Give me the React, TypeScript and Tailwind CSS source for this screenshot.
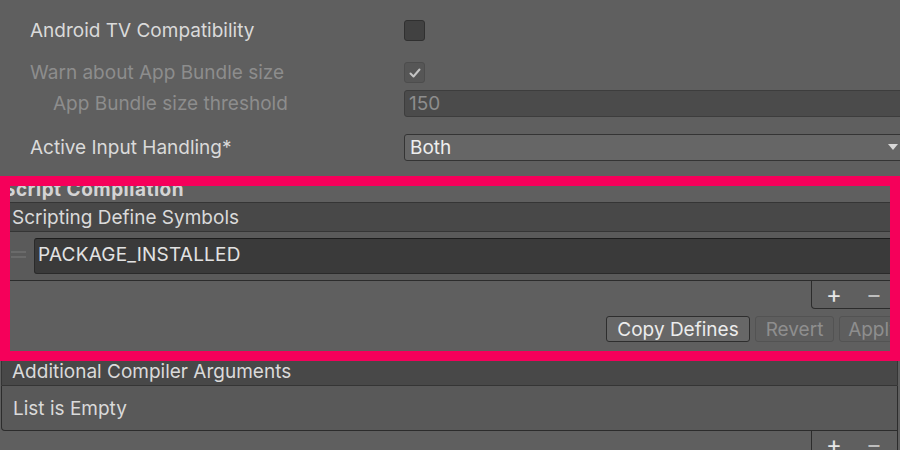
const labelCls = "pl-[30px] text-[#dadada]";

function Check() {
  return (
    <svg width="14" height="14" viewBox="0 0 14 14" fill="none">
      <path d="M2.5 7.5 L5.5 10.5 L11.5 3.5" stroke="#c4c4c4" strokeWidth="2" strokeLinecap="round" strokeLinejoin="round" />
    </svg>
  );
}

function ListFooter() {
  return (
    <div className="flex justify-end">
      <div className="flex h-[28px] w-[87px] items-center rounded-b-[4px] border-x border-b border-[#2c2c2c] bg-[#5f5f5f]">
        <span className="ml-[12px] w-[20px] text-center text-[24px] leading-none font-normal text-[#e6e6e6]">+</span>
        <span className="ml-[20px] w-[20px] text-center text-[24px] leading-none text-[#bdbdbd]">−</span>
      </div>
    </div>
  );
}

export default function App() {
  return (
    <div className="relative h-[450px] w-[900px] overflow-hidden bg-[#5f5f5f] font-['Inter','Noto_Sans',sans-serif] text-[19px] leading-none text-[#dadada]">
      <div className="flex flex-col pt-[20px]">
        {/* Android TV */}
        <div className="grid h-[21px] grid-cols-[404px_1fr] items-center">
          <span className={labelCls}>Android TV Compatibility</span>
          <div className="-mt-[1px] h-[21px] w-[21px] rounded-[3px] border border-[#303030] bg-[#414141]" />
        </div>

        {/* Warn */}
        <div className="mt-[21px] grid h-[21px] grid-cols-[404px_1fr] items-center">
          <span className="pl-[30px] text-[#8d8d8d]">Warn about App Bundle size</span>
          <div className="flex h-[21px] w-[21px] items-center justify-center rounded-[3px] border border-[#4d4d4d] bg-[#565656]">
            <Check />
          </div>
        </div>

        {/* Threshold */}
        <div className="mt-[7px] grid h-[27px] grid-cols-[404px_1fr] items-center">
          <span className="pl-[53px] text-[#8d8d8d]">App Bundle size threshold</span>
          <div className="flex h-[27px] w-[499px] items-center rounded-[3px] border border-[#3d3d3d] bg-[#4b4b4b] pl-[4px] text-[#8d8d8d]">
            150
          </div>
        </div>

        {/* Input handling */}
        <div className="mt-[17px] grid h-[27px] grid-cols-[404px_1fr] items-center">
          <span className={labelCls}>Active Input Handling*</span>
          <div className="flex h-[27px] w-[499px] items-center justify-between rounded-[3px] border border-[#343434] bg-[#666666] pl-[5px] pr-[4px] text-[#eeeeee]">
            <span>Both</span>
            <svg width="10" height="7" viewBox="0 0 10 7">
              <path d="M0 0 H10 L5 6 Z" fill="#d8d8d8" />
            </svg>
          </div>
        </div>

        {/* Script Compilation header */}
        <div className="mt-[15px] flex h-[26px] items-center pl-[3px] font-bold tracking-[0.5px] text-[#d4d4d4]">
          Script Compilation
        </div>

        {/* Scripting Define Symbols */}
        <div className="ml-[1px] w-[897px]">
          <div className="flex h-[30px] items-center rounded-t-[3px] border border-[#353535] bg-[#484848] pl-[10px]">
            Scripting Define Symbols
          </div>
          <div className="flex h-[49px] items-start border-x border-b border-[#2c2c2c] bg-[#5a5a5a] pt-[6px]">
            <div className="mt-[13px] ml-[9px] flex w-[15px] flex-col gap-[3px]">
              <div className="h-[2px] bg-[#6a6a6a]" />
              <div className="h-[2px] bg-[#6a6a6a]" />
            </div>
            <div className="ml-[8px] flex h-[36px] flex-1 items-center rounded-[3px] border border-[#2a2a2a] border-t-[#1c1c1c] bg-[#3a3a3a] pb-[4px] pl-[3px] tracking-[0.2px] text-[#e2e2e2]">
              PACKAGE_INSTALLED
            </div>
          </div>
          <ListFooter />
        </div>

        {/* Buttons */}
        <div className="mt-[7px] flex w-[909px] justify-end gap-[5px]">
          <button className="h-[26px] w-[144px] rounded-[3px] border border-[#2e2e2e] bg-[#676767] text-[#ececec]">
            Copy Defines
          </button>
          <button className="h-[26px] w-[79px] rounded-[3px] border border-[#535353] bg-[#5e5e5e] text-[#8e8e8e]">
            Revert
          </button>
          <button className="h-[26px] w-[70px] rounded-[3px] border border-[#535353] bg-[#5e5e5e] text-[#8e8e8e]">
            Apply
          </button>
        </div>

        {/* Additional Compiler Arguments */}
        <div className="mt-[15px] ml-[1px] w-[897px]">
          <div className="flex h-[29px] items-center rounded-t-[3px] border border-[#353535] bg-[#484848] pl-[10px]">
            Additional Compiler Arguments
          </div>
          <div className="flex h-[45px] items-center rounded-bl-[4px] border-x border-b border-[#2c2c2c] bg-[#595959] pl-[11px]">
            List is Empty
          </div>
          <ListFooter />
        </div>
      </div>

      {/* highlight frame */}
      <div className="pointer-events-none absolute left-0 top-[176px] h-[185px] w-[900px] border-[10px] border-[#f5005a]" />
    </div>
  );
}
